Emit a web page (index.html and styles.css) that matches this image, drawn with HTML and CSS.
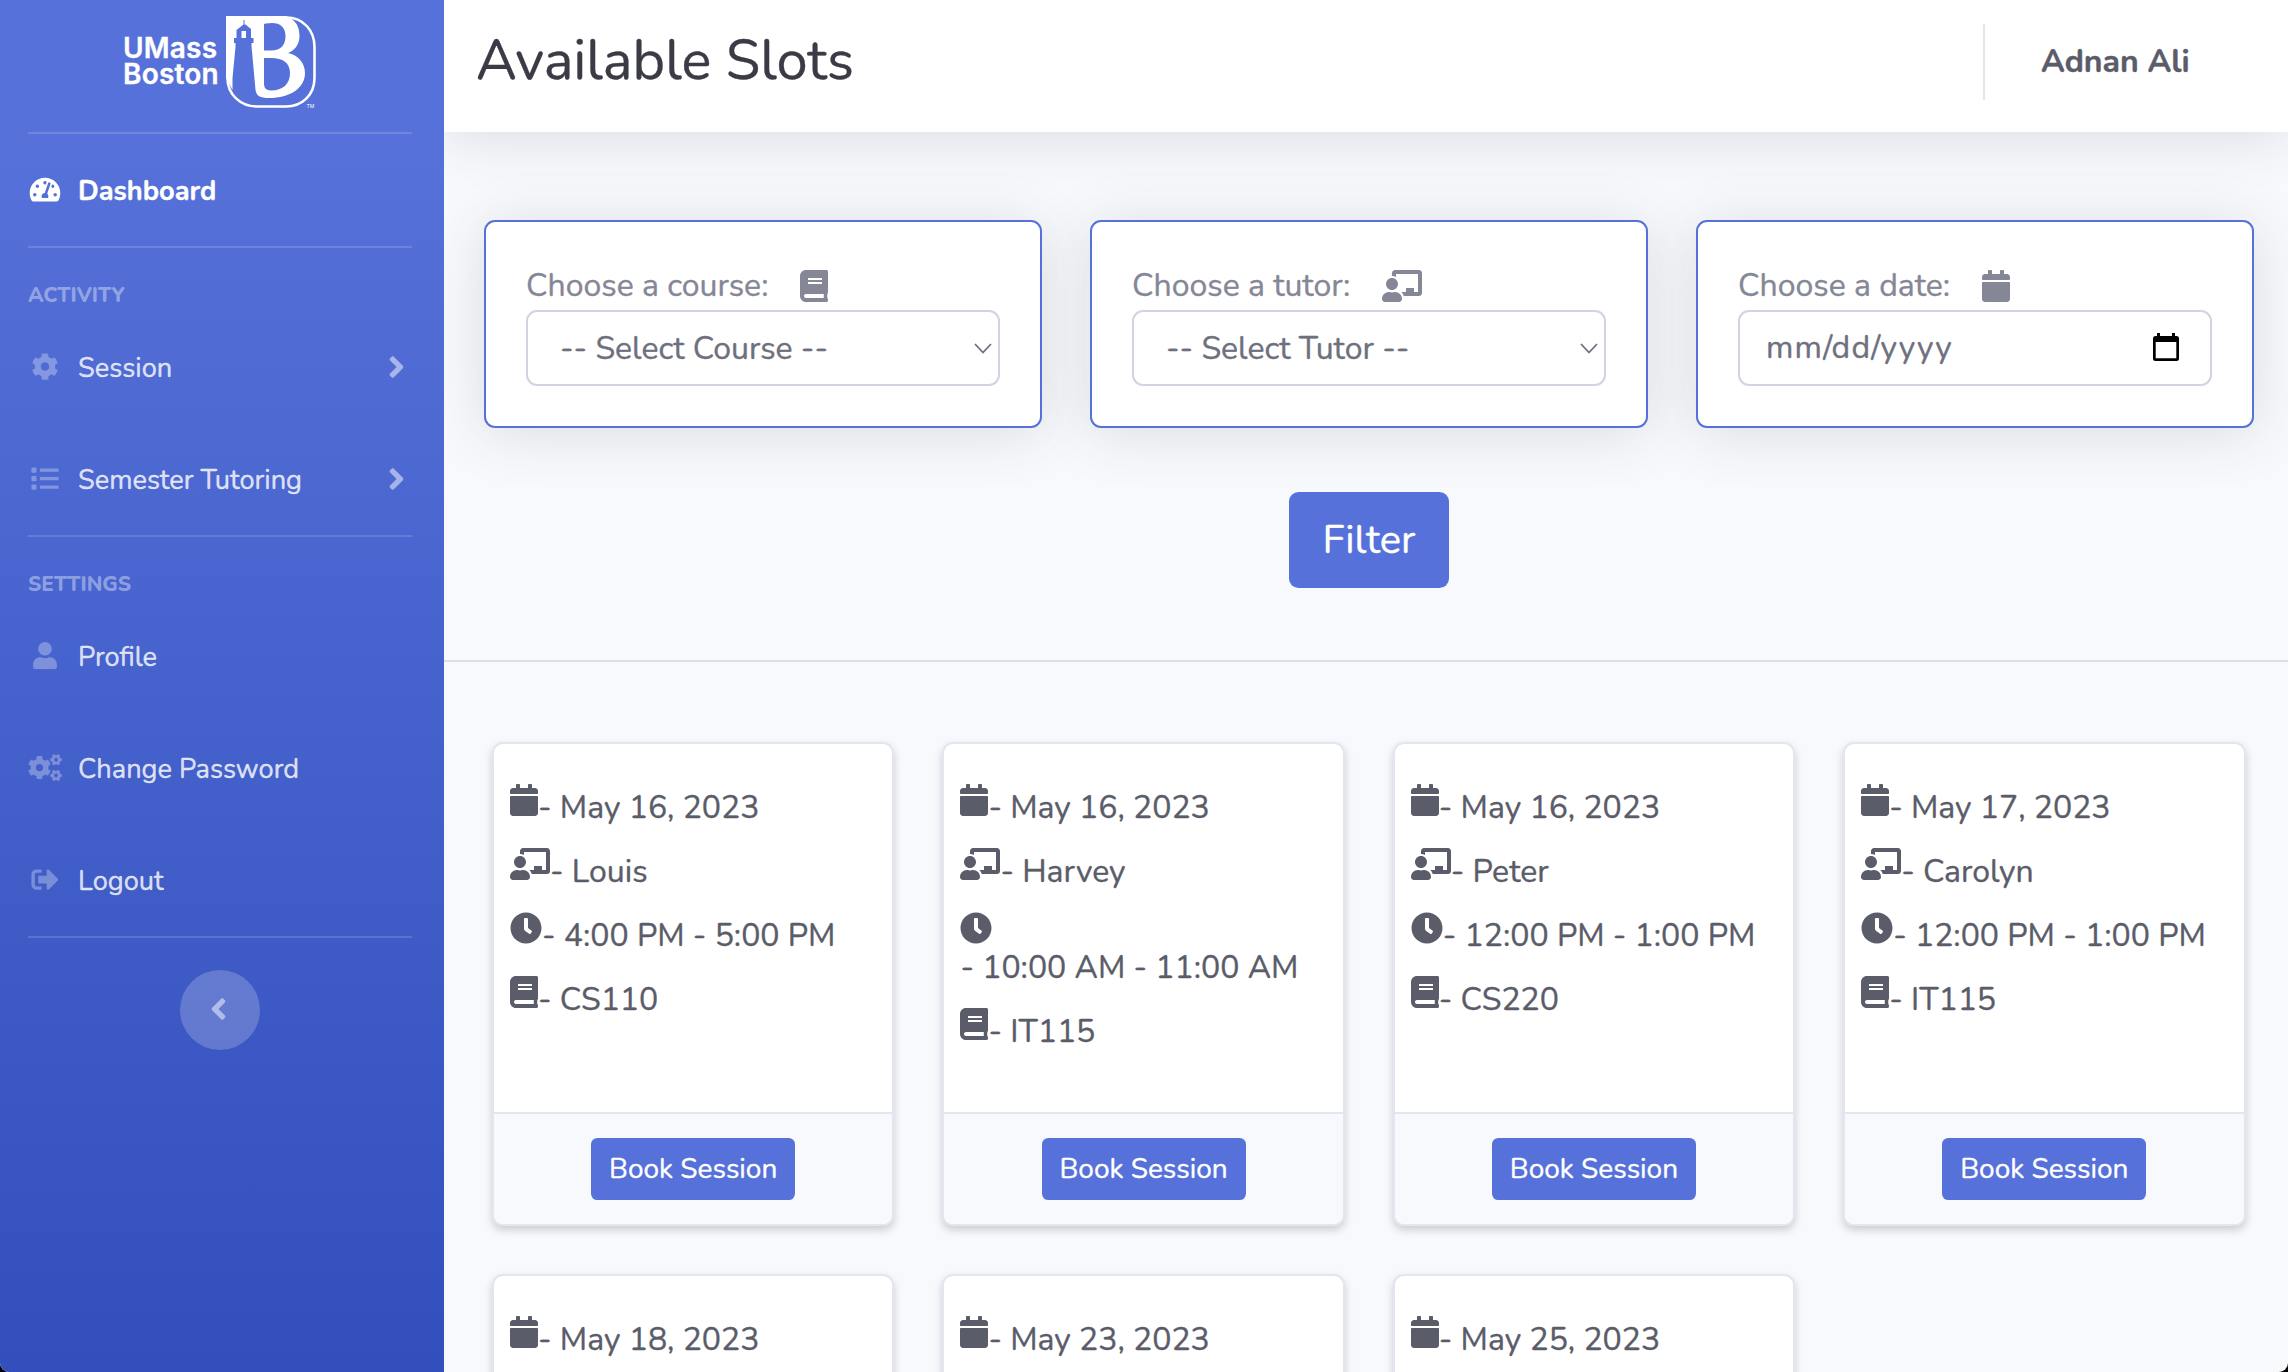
FILE: index.html
```html
<!DOCTYPE html>
<html lang="en">
<head>
<meta charset="utf-8">
<title>Available Slots</title>
<link rel="stylesheet" href="styles.css">
</head>
<body>
<svg class="sprite" aria-hidden="true">
  <symbol id="i-gauge" viewBox="0 0 576 512"><path d="M288 32C128.94 32 0 160.94 0 320c0 52.8 14.25 102.26 39.06 144.8 5.61 9.62 16.3 15.2 27.44 15.2h443c11.14 0 21.83-5.58 27.44-15.2C561.75 422.26 576 372.8 576 320c0-159.06-128.94-288-288-288zm0 64c14.71 0 26.58 10.13 30.32 23.65-1.11 2.26-2.64 4.23-3.45 6.67l-9.22 27.67c-5.13 3.49-10.97 6.01-17.64 6.01-17.67 0-32-14.33-32-32S270.33 96 288 96zM96 384c-17.67 0-32-14.33-32-32s14.33-32 32-32 32 14.33 32 32-14.33 32-32 32zm48-160c-17.67 0-32-14.33-32-32s14.33-32 32-32 32 14.33 32 32-14.33 32-32 32zm246.77-72.41l-61.33 184C343.13 347.33 352 364.54 352 384c0 11.72-3.38 22.55-8.88 32H232.88c-5.5-9.45-8.88-20.28-8.88-32 0-33.94 26.5-61.43 59.9-63.59l61.34-184.01c4.17-12.56 17.73-19.45 30.36-15.17 12.57 4.19 19.35 17.79 15.17 30.36zm14.66 57.2l15.52-46.55c3.47-1.29 7.13-2.23 11.05-2.23 17.67 0 32 14.33 32 32s-14.33 32-32 32c-11.38-.01-20.89-6.28-26.57-15.22zM480 384c-17.67 0-32-14.33-32-32s14.33-32 32-32 32 14.33 32 32-14.33 32-32 32z"/></symbol>
  <symbol id="i-cog" viewBox="0 0 512 512"><path d="M487.4 315.7l-42.6-24.6c4.3-23.2 4.3-47 0-70.2l42.6-24.6c4.9-2.8 7.1-8.6 5.5-14-11.1-35.6-30-67.8-54.7-94.6-3.8-4.1-10-5.1-14.8-2.3L380.8 110c-17.9-15.4-38.5-27.3-60.8-35.1V25.8c0-5.6-3.9-10.5-9.4-11.7-36.7-8.2-74.3-7.8-109.2 0-5.5 1.2-9.4 6.1-9.4 11.7V75c-22.2 7.9-42.8 19.8-60.8 35.1L88.7 85.5c-4.9-2.8-11-1.9-14.8 2.3-24.7 26.7-43.6 58.9-54.7 94.6-1.7 5.4.6 11.2 5.5 14L67.3 221c-4.3 23.2-4.3 47 0 70.2l-42.6 24.6c-4.9 2.8-7.1 8.6-5.5 14 11.1 35.6 30 67.8 54.7 94.6 3.8 4.1 10 5.1 14.8 2.3l42.6-24.6c17.9 15.4 38.5 27.3 60.8 35.1v49.2c0 5.6 3.9 10.5 9.4 11.7 36.7 8.2 74.3 7.8 109.2 0 5.5-1.2 9.4-6.1 9.4-11.7v-49.2c22.2-7.9 42.8-19.8 60.8-35.1l42.6 24.6c4.9 2.8 11 1.9 14.8-2.3 24.7-26.7 43.6-58.9 54.7-94.6 1.5-5.5-.7-11.3-5.6-14.1zM256 336c-44.1 0-80-35.9-80-80s35.9-80 80-80 80 35.9 80 80-35.9 80-80 80z"/></symbol>
  <symbol id="i-cogs" viewBox="0 0 640 512">
    <use href="#i-cog" x="-8" y="32" width="448" height="448"/>
    <g transform="rotate(30 528 108)"><use href="#i-cog" x="414" y="-6" width="228" height="228"/></g>
    <g transform="rotate(30 528 404)"><use href="#i-cog" x="414" y="290" width="228" height="228"/></g>
  </symbol>
  <symbol id="i-list" viewBox="0 0 512 512"><path d="M80 368H16a16 16 0 0 0-16 16v64a16 16 0 0 0 16 16h64a16 16 0 0 0 16-16v-64a16 16 0 0 0-16-16zm0-320H16A16 16 0 0 0 0 64v64a16 16 0 0 0 16 16h64a16 16 0 0 0 16-16V64a16 16 0 0 0-16-16zm0 160H16a16 16 0 0 0-16 16v64a16 16 0 0 0 16 16h64a16 16 0 0 0 16-16v-64a16 16 0 0 0-16-16zm416 176H176a16 16 0 0 0-16 16v32a16 16 0 0 0 16 16h320a16 16 0 0 0 16-16v-32a16 16 0 0 0-16-16zm0-320H176a16 16 0 0 0-16 16v32a16 16 0 0 0 16 16h320a16 16 0 0 0 16-16V80a16 16 0 0 0-16-16zm0 160H176a16 16 0 0 0-16 16v32a16 16 0 0 0 16 16h320a16 16 0 0 0 16-16v-32a16 16 0 0 0-16-16z"/></symbol>
  <symbol id="i-user" viewBox="0 0 448 512"><path d="M224 256c70.7 0 128-57.3 128-128S294.7 0 224 0 96 57.3 96 128s57.3 128 128 128zm89.6 32h-16.7c-22.2 10.2-46.9 16-72.9 16s-50.6-5.8-72.9-16h-16.7C60.2 288 0 348.2 0 422.4V464c0 26.5 21.5 48 48 48h352c26.5 0 48-21.5 48-48v-41.6c0-74.2-60.2-134.4-134.4-134.4z"/></symbol>
  <symbol id="i-logout" viewBox="0 0 512 512"><path d="M497 273L329 441c-15 15-41 4.5-41-17v-96H152c-13.3 0-24-10.7-24-24v-96c0-13.3 10.7-24 24-24h136V88c0-21.4 25.9-32 41-17l168 168c9.3 9.4 9.3 24.6 0 34zM192 436v-40c0-6.6-5.4-12-12-12H96c-17.7 0-32-14.3-32-32V160c0-17.7 14.3-32 32-32h84c6.6 0 12-5.4 12-12V76c0-6.6-5.4-12-12-12H96c-53 0-96 43-96 96v192c0 53 43 96 96 96h84c6.6 0 12-5.4 12-12z"/></symbol>
  <symbol id="i-angle" viewBox="0 0 256 512"><path d="M224.3 273l-136 136c-9.4 9.4-24.6 9.4-33.9 0l-22.6-22.6c-9.4-9.4-9.4-24.6 0-33.9l96.4-96.4-96.4-96.4c-9.4-9.4-9.4-24.6 0-33.9L54.3 103c9.4-9.4 24.6-9.4 33.9 0l136 136c9.5 9.4 9.5 24.6.1 34z"/></symbol>
  <symbol id="i-calendar" viewBox="0 0 448 512"><path d="M12 192h424c6.6 0 12 5.4 12 12v260c0 26.5-21.5 48-48 48H48c-26.5 0-48-21.5-48-48V204c0-6.6 5.4-12 12-12zm436-44v-36c0-26.5-21.5-48-48-48h-48V12c0-6.6-5.4-12-12-12h-40c-6.6 0-12 5.4-12 12v52H160V12c0-6.6-5.4-12-12-12h-40c-6.6 0-12 5.4-12 12v52H48C21.5 64 0 85.5 0 112v36c0 6.6 5.4 12 12 12h424c6.6 0 12-5.4 12-12z"/></symbol>
  <symbol id="i-teacher" viewBox="0 0 640 512"><path d="M208 352c-2.39 0-4.78.35-7.06 1.09C187.98 357.3 174.35 360 160 360c-14.35 0-27.98-2.7-40.95-6.91-2.28-.74-4.66-1.09-7.05-1.09C49.94 352-.33 402.48 0 464.62.14 490.88 21.73 512 48 512h224c26.27 0 47.86-21.12 48-47.38.33-62.14-49.94-112.62-112-112.62zm-48-32c53.02 0 96-42.98 96-96s-42.98-96-96-96-96 42.98-96 96 42.98 96 96 96zM592 0H208c-26.47 0-48 22.25-48 49.59V96c23.42 0 45.1 6.78 64 17.8V64h352v288h-64v-64H384v64h-76.24c19.1 16.69 33.12 38.73 39.69 64H592c26.47 0 48-22.25 48-49.59V49.59C640 22.25 618.47 0 592 0z"/></symbol>
  <symbol id="i-clock" viewBox="0 0 512 512"><path d="M256,8C119,8,8,119,8,256S119,504,256,504,504,393,504,256,393,8,256,8Zm92.49,313h0l-20,25a16,16,0,0,1-22.49,2.5h0l-67-49.72a40,40,0,0,1-15-31.23V112a16,16,0,0,1,16-16h32a16,16,0,0,1,16,16V256l58,42.5A16,16,0,0,1,348.49,321Z"/></symbol>
  <symbol id="i-book" viewBox="0 0 448 512"><path d="M448 360V24c0-13.3-10.7-24-24-24H96C43 0 0 43 0 96v320c0 53 43 96 96 96h328c13.3 0 24-10.7 24-24v-16c0-7.5-3.5-14.3-8.9-18.7-4.2-15.4-4.2-59.3 0-74.7 5.4-4.3 8.9-11.1 8.9-18.6zM128 134c0-3.3 2.7-6 6-6h212c3.3 0 6 2.7 6 6v20c0 3.3-2.7 6-6 6H134c-3.3 0-6-2.7-6-6v-20zm0 64c0-3.3 2.7-6 6-6h212c3.3 0 6 2.7 6 6v20c0 3.3-2.7 6-6 6H134c-3.3 0-6-2.7-6-6v-20zm253.4 250H96c-17.7 0-32-14.3-32-32 0-17.6 14.4-32 32-32h285.4c-1.9 17.1-1.9 46.9 0 64z"/></symbol>
</svg>

<div class="app">
  <nav class="sidebar">
    <a class="brand">
      <span class="brand-name">UMass<br>Boston</span>
      <svg class="brand-mark" viewBox="0 0 92 94">
        <path class="ring" d="M1.5 1.5H60C78 1.500 88.500 15 88.500 31V62C88.500 79 76 90.500 60 90.500H31C15 90.500 1.500 79 1.500 62Z"/>
        <path class="solid" fill-rule="evenodd" d="M0 0H60Q73.500 5 73.500 20C73.500 29 68 35 62 37C72 39 79 47 79 57C79 72 64 82 43 82C34 82 30.500 80 29.500 74L25.500 30V27H27.500V22H25V13L19.500 8.500H18.500V4H17.500V8.500L10.500 14V22H8V27H9.500V31L6.500 62V74L0 62ZM38 8.500V34.500H45C55 34.500 59.500 29 59.500 20C59.500 11 54 7 46 7Q38 7 38 8.500ZM38 42V68Q38 74.500 45 74.500C57 74.500 64 68 64 57C64 47 57 42 45 42Z"/>
        <rect class="solid" x="15.500" y="15" width="4.500" height="7"/>
        <text class="tm" x="80.500" y="92">TM</text>
      </svg>
    </a>
    <hr class="divider">
    <a class="item active"><svg class="ico"><use href="#i-gauge"/></svg><span>Dashboard</span></a>
    <hr class="divider">
    <div class="heading">Activity</div>
    <a class="item"><svg class="ico"><use href="#i-cog"/></svg><span>Session</span><svg class="arrow"><use href="#i-angle"/></svg></a>
    <a class="item"><svg class="ico"><use href="#i-list"/></svg><span>Semester Tutoring</span><svg class="arrow"><use href="#i-angle"/></svg></a>
    <hr class="divider">
    <div class="heading">Settings</div>
    <a class="item"><svg class="ico"><use href="#i-user"/></svg><span>Profile</span></a>
    <a class="item"><svg class="ico"><use href="#i-cogs"/></svg><span>Change Password</span></a>
    <a class="item"><svg class="ico"><use href="#i-logout"/></svg><span>Logout</span></a>
    <hr class="divider">
    <button class="toggle"><svg class="arrow"><use href="#i-angle"/></svg></button>
  </nav>

  <div class="content">
    <header class="topbar">
      <h1>Available Slots</h1>
      <div class="account">Adnan Ali</div>
    </header>

    <form class="filters">
      <div class="filter-card">
        <label><span>Choose a course:</span><svg class="fi"><use href="#i-book"/></svg></label>
        <div class="control"><span>-- Select Course --</span><svg class="caret" viewBox="0 0 18 11"><path d="M1 1l8 8.500 8-8.500"/></svg></div>
      </div>
      <div class="filter-card">
        <label><span>Choose a tutor:</span><svg class="fi wide"><use href="#i-teacher"/></svg></label>
        <div class="control"><span>-- Select Tutor --</span><svg class="caret" viewBox="0 0 18 11"><path d="M1 1l8 8.500 8-8.500"/></svg></div>
      </div>
      <div class="filter-card">
        <label><span>Choose a date:</span><svg class="fi"><use href="#i-calendar"/></svg></label>
        <div class="control date"><span>mm/dd/yyyy</span><svg class="picker" viewBox="0 0 26 28"><path fill-rule="evenodd" d="M4 0h3v3h12V0h3v3h1.500A2.500 2.500 0 0 1 26 5.500v20a2.500 2.500 0 0 1-2.500 2.500h-21A2.500 2.500 0 0 1 0 25.500v-20A2.500 2.500 0 0 1 2.500 3H4zM2.700 9v16.300h20.600V9z"/></svg></div>
      </div>
    </form>
    <button class="filter-btn">Filter</button>
    <hr class="rule">

    <main class="slots">
      <article class="slot">
        <div class="body">
          <p><svg class="si"><use href="#i-calendar"/></svg><span>- May 16, 2023</span></p>
          <p><svg class="si wide"><use href="#i-teacher"/></svg><span>- Louis</span></p>
          <p><svg class="si round"><use href="#i-clock"/></svg><span>- 4:00 PM - 5:00 PM</span></p>
          <p><svg class="si"><use href="#i-book"/></svg><span>- CS110</span></p>
        </div>
        <footer><button class="book">Book Session</button></footer>
      </article>
      <article class="slot">
        <div class="body">
          <p><svg class="si"><use href="#i-calendar"/></svg><span>- May 16, 2023</span></p>
          <p><svg class="si wide"><use href="#i-teacher"/></svg><span>- Harvey</span></p>
          <p><svg class="si round"><use href="#i-clock"/></svg><span>- 10:00 AM - 11:00 AM</span></p>
          <p><svg class="si"><use href="#i-book"/></svg><span>- IT115</span></p>
        </div>
        <footer><button class="book">Book Session</button></footer>
      </article>
      <article class="slot">
        <div class="body">
          <p><svg class="si"><use href="#i-calendar"/></svg><span>- May 16, 2023</span></p>
          <p><svg class="si wide"><use href="#i-teacher"/></svg><span>- Peter</span></p>
          <p><svg class="si round"><use href="#i-clock"/></svg><span>- 12:00 PM - 1:00 PM</span></p>
          <p><svg class="si"><use href="#i-book"/></svg><span>- CS220</span></p>
        </div>
        <footer><button class="book">Book Session</button></footer>
      </article>
      <article class="slot">
        <div class="body">
          <p><svg class="si"><use href="#i-calendar"/></svg><span>- May 17, 2023</span></p>
          <p><svg class="si wide"><use href="#i-teacher"/></svg><span>- Carolyn</span></p>
          <p><svg class="si round"><use href="#i-clock"/></svg><span>- 12:00 PM - 1:00 PM</span></p>
          <p><svg class="si"><use href="#i-book"/></svg><span>- IT115</span></p>
        </div>
        <footer><button class="book">Book Session</button></footer>
      </article>
      <article class="slot">
        <div class="body"><p><svg class="si"><use href="#i-calendar"/></svg><span>- May 18, 2023</span></p></div>
      </article>
      <article class="slot">
        <div class="body"><p><svg class="si"><use href="#i-calendar"/></svg><span>- May 23, 2023</span></p></div>
      </article>
      <article class="slot">
        <div class="body"><p><svg class="si"><use href="#i-calendar"/></svg><span>- May 25, 2023</span></p></div>
      </article>
    </main>
  </div>
</div>
</body>
</html>
```
FILE: styles.css
```css
* { box-sizing: border-box; }

html { background: #000; }

body {
  margin: 0;
  font-family: Nunito, Lato, sans-serif;
  font-size: 32px;
  color: #858796;
  -webkit-text-stroke: .35px currentColor;
}

button { border: 0; font-family: inherit; color: #fff; background: #5671d9; }
svg { flex: none; fill: currentColor; }
.sprite { display: none; }

.app {
  display: flex;
  height: 1372px;
  overflow: hidden;
  border-radius: 0 0 9px 9px;
  background: #f8f9fd;
}

/* Sidebar */
.sidebar {
  position: relative;
  z-index: 2;
  flex: none;
  width: 444px;
  padding: 0 32px 0 28px;
  background: linear-gradient(180deg, #5671d9 10%, #324fbc 100%);
}

.brand {
  display: flex;
  height: 132px;
  padding: 16px 0 0 95px;
  color: #fff;
}
.brand-name {
  width: 103px;
  padding-top: 19px;
  font: 600 28px/26px Inter, sans-serif;
  letter-spacing: .2px;
}
.brand-mark { width: 92px; height: 94px; }
.ring { fill: none; stroke: #fff; stroke-width: 2.6; }
.tm { font: 5px Inter, sans-serif; -webkit-text-stroke: 0; }

.divider { height: 2px; margin: 0; border: 0; background: rgba(255, 255, 255, .15); }

.heading {
  height: 63px;
  padding-top: 33px;
  font-size: 20.8px;
  font-weight: 800;
  line-height: 28px;
  text-transform: uppercase;
  color: rgba(255, 255, 255, .4);
  -webkit-text-stroke: 0;
}

.item {
  display: flex;
  align-items: center;
  gap: 16px;
  height: 112px;
  font-size: 27.2px;
  color: rgba(255, 255, 255, .8);
}
.item span { padding-top: 2px; }
.item .ico { width: 34px; height: 27.2px; color: rgba(255, 255, 255, .3); }
.item.active, .item.active .ico { color: #fff; font-weight: 700; }
.arrow { width: 17px; height: 34px; color: rgba(255, 255, 255, .5); }
.item .arrow { margin: 0 7px 0 auto; }

.toggle {
  display: grid;
  place-items: center;
  width: 80px;
  height: 80px;
  margin: 32px auto 0;
  padding: 0 4px 3px 0;
  border-radius: 50%;
  background: rgba(255, 255, 255, .2);
}
.toggle .arrow { transform: scaleX(-1); }

/* Main column */
.content { flex: 1; display: flex; flex-direction: column; }

.topbar {
  position: relative;
  z-index: 1;
  display: flex;
  justify-content: space-between;
  flex: none;
  height: 132px;
  padding: 24px 42px 32px 32px;
  background: #fff;
  box-shadow: 0 5px 56px rgba(58, 59, 69, .15);
}
h1 { margin: 0; font-size: 56px; font-weight: 400; line-height: 74px; color: #3a3b45; }
.account {
  width: 263px;
  height: 76px;
  padding-left: 56px;
  border-left: 2px solid #e3e6f0;
  font-weight: 700;
  line-height: 75px;
  color: #5a5c69;
}

.filters {
  display: grid;
  grid-template-columns: repeat(3, 1fr);
  gap: 48px;
  padding: 88px 34px 0 40px;
}
.filter-card {
  height: 208px;
  padding: 40px;
  border: 2px solid #5671d9;
  border-radius: 11px;
  background: #fff;
  box-shadow: 0 5px 56px rgba(58, 59, 69, .15);
}
.filter-card label { display: flex; align-items: center; gap: 32px; height: 48px; }
.filter-card label span { padding-bottom: 2px; }
.fi { width: 28px; height: 32px; }
.fi.wide { width: 40px; }
.control {
  display: flex;
  align-items: center;
  justify-content: space-between;
  height: 76px;
  padding: 0 6px 0 32px;
  border: 2px solid #d1d3e2;
  border-radius: 11px;
  color: #6e707e;
}
.caret { width: 18px; height: 11px; fill: none; stroke: #6e707e; stroke-width: 1.8; }
.date { padding: 0 31px 2px 26px; letter-spacing: 1.2px; }
.picker { width: 26px; height: 28px; color: #000; }

.filter-btn {
  align-self: center;
  flex: none;
  width: 160px;
  height: 96px;
  margin: 64px 6px 0 12px;
  border-radius: 9.6px;
  font-size: 40px;
}
.rule { flex: none; width: 100%; height: 2px; margin: 72px 0 80px; border: 0; background: #dedfe5; }

/* Slot cards */
.slots {
  display: grid;
  grid-template-columns: repeat(4, 1fr);
  grid-auto-rows: 484px;
  gap: 48px;
  padding: 0 42.5px 0 48px;
}
.slot {
  display: flex;
  flex-direction: column;
  border: 2px solid #e3e6f0;
  border-radius: 11px;
  overflow: hidden;
  background: #fff;
  box-shadow: 0 4px 8px rgba(0, 0, 0, .18);
}
.body { flex: 1; padding: 40px 16px 0; color: #5a5c69; }
.slot p {
  display: flex;
  flex-wrap: wrap;
  margin: 0 0 24.5px;
  line-height: 32px;
}
.slot p span { padding-top: 7.5px; white-space: nowrap; }
.si { width: 28px; height: 32px; }
.si.wide { width: 40px; }
.si.round { width: 32px; }
.slot footer {
  height: 112px;
  padding-top: 24px;
  border-top: 2px solid #e3e6f0;
  background: #f8f9fd;
  text-align: center;
}
.book { width: 204px; height: 62px; padding: 0; border-radius: 6.4px; font-size: 28px; }
```
